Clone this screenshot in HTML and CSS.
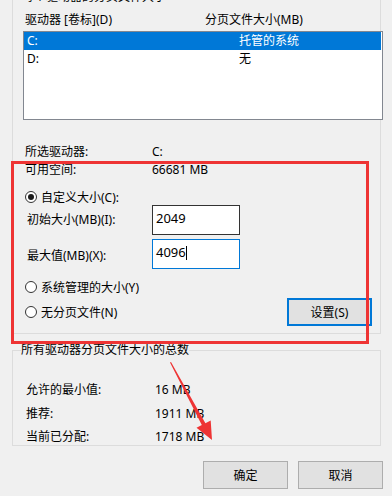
FILE: index.html
```html
<!DOCTYPE html>
<html lang="zh-CN">
<head>
<meta charset="utf-8">
<link rel="stylesheet" href="styles.css">
</head>
<body>
<div class="page">
  <div class="group group1">
    <div class="g1-label">每个驱动器的分页文件大小</div>
    <div class="colhead"><span class="c1">驱动器 [卷标](D)</span><span>分页文件大小(MB)</span></div>
    <div class="listbox">
      <div class="lrow selected"><span class="lc1">C:</span><span>托管的系统</span></div>
      <div class="lrow"><span class="lc1">D:</span><span>无</span></div>
    </div>
    <div class="info first"><span class="il">所选驱动器:</span><span>C:</span></div>
    <div class="info"><span class="il">可用空间:</span><span>66681 MB</span></div>
    <div class="radio-row r-custom"><span class="radio checked"></span><span>自定义大小(C):</span></div>
    <div class="field-row"><span class="fl">初始大小(MB)(I):</span><div class="tbox">2049</div></div>
    <div class="field-row second"><span class="fl">最大值(MB)(X):</span><div class="tbox focus">4096<span class="caret"></span></div></div>
    <div class="radio-row r-sys"><span class="radio"></span><span>系统管理的大小(Y)</span></div>
    <div class="radio-row r-none"><span class="radio"></span><span>无分页文件(N)</span><button class="btn btn-set">设置(S)</button></div>
  </div>
  <div class="group group2">
    <div class="g2-label">所有驱动器分页文件大小的总数</div>
    <div class="totals">
      <div class="trow"><span class="tl">允许的最小值:</span><span>16 MB</span></div>
      <div class="trow"><span class="tl">推荐:</span><span>1911 MB</span></div>
      <div class="trow"><span class="tl">当前已分配:</span><span>1718 MB</span></div>
    </div>
  </div>
  <div class="footer">
    <button class="btn">确定</button>
    <button class="btn">取消</button>
  </div>
  <div class="mark"></div>
  <svg class="arrow" width="392" height="496" viewBox="0 0 392 496">
    <polygon points="171,362 205.4,423.2 210.7,420.4 212,440 196.5,427.8 201.8,425 170,362.5" fill="#ee3434"/>
  </svg>
</div>
</body>
</html>
```
FILE: styles.css
```css
html, body {
  margin: 0;
  padding: 0;
  background: #f0f0f0;
}
body {
  font-family: "Noto Sans", "Noto Sans CJK SC", sans-serif;
  font-size: 12px;
  color: #000;
  overflow: hidden;
}
.page {
  position: relative;
  width: 392px;
  height: 496px;
  overflow: hidden;
}
.group {
  box-sizing: border-box;
  margin-left: 12px;
  width: 369px;
  border: 1px solid #dcdcdc;
}
.group1 {
  border-top: 0;
  height: 334px;
  display: flex;
  flex-direction: column;
}
.g1-label {
  margin: -11px 0 0 9px;
  height: 16px;
  line-height: 16px;
}
.colhead {
  display: flex;
  margin-top: 7px;
  height: 16px;
  line-height: 16px;
  padding-left: 12px;
}
.colhead .c1 {
  width: 180px;
}
.listbox {
  box-sizing: border-box;
  margin: 3px 0 0 10px;
  width: 360px;
  height: 89px;
  border: 1px solid #828790;
  background: #fff;
  padding-right: 1px;
}
.lrow {
  display: flex;
  height: 18px;
  line-height: 18px;
}
.lrow.selected {
  background: #0078d7;
  color: #fff;
}
.lc1 {
  width: 212px;
  padding-left: 3px;
}
.info {
  display: flex;
  height: 18px;
  line-height: 18px;
  padding-left: 12px;
}
.info.first {
  margin-top: 23px;
}
.il {
  width: 127px;
}
.radio-row {
  display: flex;
  align-items: center;
  padding-left: 12px;
  gap: 4px;
}
.r-custom {
  margin-top: 9px;
  height: 17px;
}
.r-sys {
  margin-top: 9px;
  height: 18px;
}
.r-none {
  margin-top: 2px;
  height: 28px;
}
.radio {
  box-sizing: border-box;
  width: 12px;
  height: 12px;
  border: 1px solid #333;
  border-radius: 50%;
  background: #fff;
  display: flex;
  align-items: center;
  justify-content: center;
}
.radio.checked::after {
  content: "";
  width: 6px;
  height: 6px;
  border-radius: 50%;
  background: #1a1a1a;
}
.field-row {
  display: flex;
  align-items: center;
  height: 30px;
  padding-left: 14px;
}
.field-row.second {
  margin-top: 4px;
}
.fl {
  width: 125px;
  margin-top: -3px;
}
.field-row.second .fl {
  margin-top: 1px;
}
.tbox {
  box-sizing: border-box;
  width: 88px;
  height: 30px;
  border: 1px solid #333;
  background: #fff;
  font-size: 13px;
  line-height: 20px;
  padding: 2px 0 0 3px;
  display: flex;
  align-items: flex-start;
}
.tbox.focus {
  border-color: #0078d7;
}
.caret {
  display: inline-block;
  width: 1px;
  height: 14px;
  margin-top: 4px;
  background: #000;
}
.btn {
  box-sizing: border-box;
  width: 85px;
  height: 28px;
  border: 1px solid #adadad;
  background: #e1e1e1;
  font-family: inherit;
  font-size: 12px;
  color: #000;
  padding: 0;
  margin: 0;
}
.btn-set {
  margin-left: auto;
  margin-right: 8px;
  border: 2px solid #0078d7;
}
.group2 {
  margin-top: 16px;
  height: 96px;
}
.g2-label {
  display: inline-block;
  margin: -9px 0 0 8px;
  height: 16px;
  line-height: 16px;
  background: #f0f0f0;
  vertical-align: top;
}
.totals {
  display: flex;
  flex-direction: column;
  gap: 5.5px;
  margin-top: 13px;
}
.trow {
  display: flex;
  height: 18px;
  line-height: 18px;
  padding-left: 13px;
}
.tl {
  width: 129px;
}
.footer {
  display: flex;
  justify-content: flex-end;
  gap: 10px;
  margin-top: 15px;
  padding-right: 9px;
}
.mark {
  position: absolute;
  left: 11px;
  top: 161px;
  width: 358px;
  height: 183px;
  box-sizing: border-box;
  border: 3px solid #ee3434;
  pointer-events: none;
}
.arrow {
  position: absolute;
  left: 0;
  top: 0;
  pointer-events: none;
}
```
